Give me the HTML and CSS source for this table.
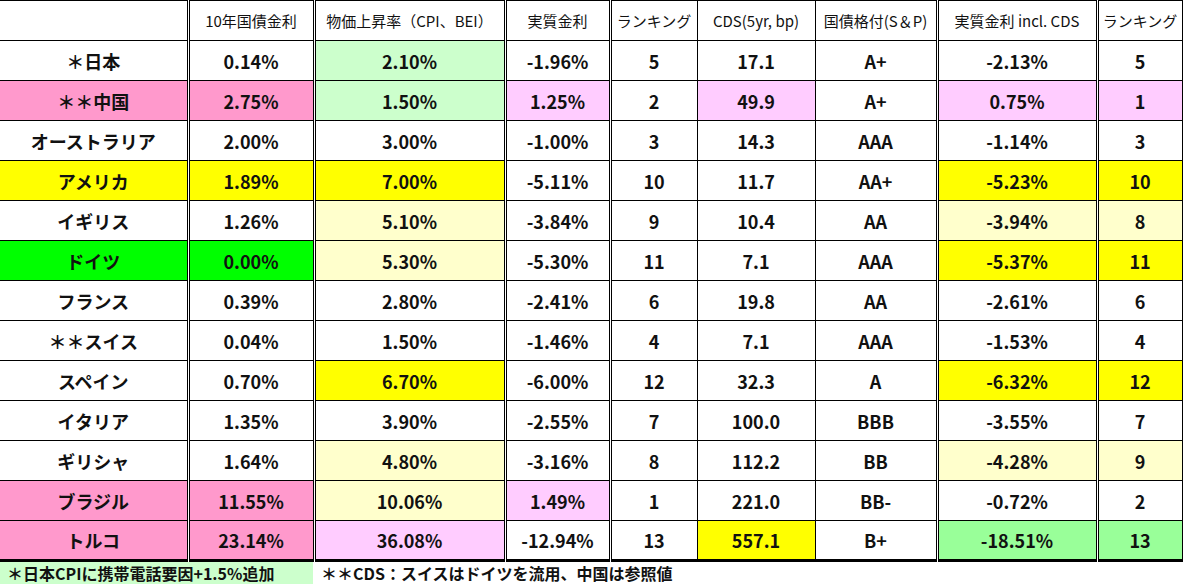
FILE: index.html
```html
<!DOCTYPE html>
<html lang="ja">
<head>
<meta charset="utf-8">
<link rel="stylesheet" href="styles.css">
</head>
<body>
<table class="grid">
  <colgroup>
    <col class="c1"><col class="c2"><col class="c3"><col class="c4"><col class="c5"><col class="c6"><col class="c7"><col class="c8"><col class="c9">
  </colgroup>
  <thead>
    <tr class="head">
      <th></th>
      <th>10年国債金利</th>
      <th>物価上昇率（CPI、BEI）</th>
      <th>実質金利</th>
      <th>ランキング</th>
      <th>CDS(5yr, bp)</th>
      <th>国債格付(S＆P)</th>
      <th>実質金利 incl. CDS</th>
      <th>ランキング</th>
    </tr>
  </thead>
  <tbody>
    <tr><td>＊日本</td><td>0.14%</td><td class="lgreen">2.10%</td><td>-1.96%</td><td>5</td><td>17.1</td><td>A+</td><td>-2.13%</td><td>5</td></tr>
    <tr><td class="pink">＊＊中国</td><td class="pink">2.75%</td><td class="lgreen">1.50%</td><td class="lpink">1.25%</td><td>2</td><td class="lpink">49.9</td><td>A+</td><td class="lpink">0.75%</td><td class="lpink">1</td></tr>
    <tr><td>オーストラリア</td><td>2.00%</td><td>3.00%</td><td>-1.00%</td><td>3</td><td>14.3</td><td>AAA</td><td>-1.14%</td><td>3</td></tr>
    <tr><td class="yellow">アメリカ</td><td class="yellow">1.89%</td><td class="yellow">7.00%</td><td>-5.11%</td><td>10</td><td>11.7</td><td>AA+</td><td class="yellow">-5.23%</td><td class="yellow">10</td></tr>
    <tr><td>イギリス</td><td>1.26%</td><td class="lyellow">5.10%</td><td>-3.84%</td><td>9</td><td>10.4</td><td>AA</td><td class="lyellow">-3.94%</td><td class="lyellow">8</td></tr>
    <tr><td class="green">ドイツ</td><td class="green">0.00%</td><td class="lyellow">5.30%</td><td>-5.30%</td><td>11</td><td>7.1</td><td>AAA</td><td class="yellow">-5.37%</td><td class="yellow">11</td></tr>
    <tr><td>フランス</td><td>0.39%</td><td>2.80%</td><td>-2.41%</td><td>6</td><td>19.8</td><td>AA</td><td>-2.61%</td><td>6</td></tr>
    <tr><td>＊＊スイス</td><td>0.04%</td><td>1.50%</td><td>-1.46%</td><td>4</td><td>7.1</td><td>AAA</td><td>-1.53%</td><td>4</td></tr>
    <tr><td>スペイン</td><td>0.70%</td><td class="yellow">6.70%</td><td>-6.00%</td><td>12</td><td>32.3</td><td>A</td><td class="yellow">-6.32%</td><td class="yellow">12</td></tr>
    <tr><td>イタリア</td><td>1.35%</td><td>3.90%</td><td>-2.55%</td><td>7</td><td>100.0</td><td>BBB</td><td>-3.55%</td><td>7</td></tr>
    <tr><td>ギリシャ</td><td>1.64%</td><td class="lyellow">4.80%</td><td>-3.16%</td><td>8</td><td>112.2</td><td>BB</td><td class="lyellow">-4.28%</td><td class="lyellow">9</td></tr>
    <tr><td class="pink">ブラジル</td><td class="pink">11.55%</td><td class="lyellow">10.06%</td><td class="lpink">1.49%</td><td>1</td><td>221.0</td><td>BB-</td><td>-0.72%</td><td>2</td></tr>
    <tr class="last"><td class="pink">トルコ</td><td class="pink">23.14%</td><td class="lpink">36.08%</td><td>-12.94%</td><td>13</td><td class="yellow">557.1</td><td>B+</td><td class="mint">-18.51%</td><td class="mint">13</td></tr>
  </tbody>
</table>
<div class="notes">
  <div class="note note-green">＊日本CPIに携帯電話要因+1.5%追加</div>
  <div class="note">＊＊CDS：スイスはドイツを流用、中国は参照値</div>
</div>
</body>
</html>
```
FILE: styles.css
```css
html, body {
  margin: 0;
  padding: 0;
  background: #ffffff;
}
body {
  width: 1183px;
  height: 585px;
  overflow: hidden;
  font-family: "Noto Sans CJK JP", "Noto Sans", sans-serif;
  color: #111;
}
.grid {
  border-collapse: collapse;
  table-layout: fixed;
  width: 1182px;
}
.c1 { width: 188px; }
.c2 { width: 126px; }
.c3 { width: 191px; }
.c4 { width: 105px; }
.c5 { width: 87px; }
.c6 { width: 118px; }
.c7 { width: 122px; }
.c8 { width: 160px; }
.c9 { width: 85px; }

.grid th, .grid td {
  padding: 0;
  text-align: center;
  vertical-align: middle;
  border: 1px solid #000;
  white-space: nowrap;
  overflow: hidden;
}
.grid th:first-child, .grid td:first-child {
  border-left: none;
}
.grid th:nth-child(1), .grid td:nth-child(1),
.grid th:nth-child(2), .grid td:nth-child(2),
.grid th:nth-child(3), .grid td:nth-child(3),
.grid th:nth-child(4), .grid td:nth-child(4),
.grid th:nth-child(7), .grid td:nth-child(7),
.grid th:nth-child(8), .grid td:nth-child(8) {
  border-right: 3px double #000;
}
.head {
  height: 40px;
}
.head th {
  font-size: 15px;
  font-weight: 400;
}
.grid tbody tr {
  height: 40px;
}
.grid td {
  font-size: 18px;
  font-weight: 700;
}
.grid tr.last td {
  border-bottom: 3px solid #000;
}

.pink { background: #ff99cc; }
.lpink { background: #ffccff; }
.lgreen { background: #ccffcc; }
.yellow { background: #ffff00; }
.lyellow { background: #ffffcc; }
.green { background: #00ff00; }
.mint { background: #99ff99; }

.notes {
  display: flex;
  height: 22px;
  align-items: stretch;
}
.note {
  font-size: 16px;
  font-weight: 700;
  line-height: 22px;
  padding-left: 8px;
}
.note-green {
  width: 306px;
  padding-left: 7px;
  background: #ccffcc;
}
```
